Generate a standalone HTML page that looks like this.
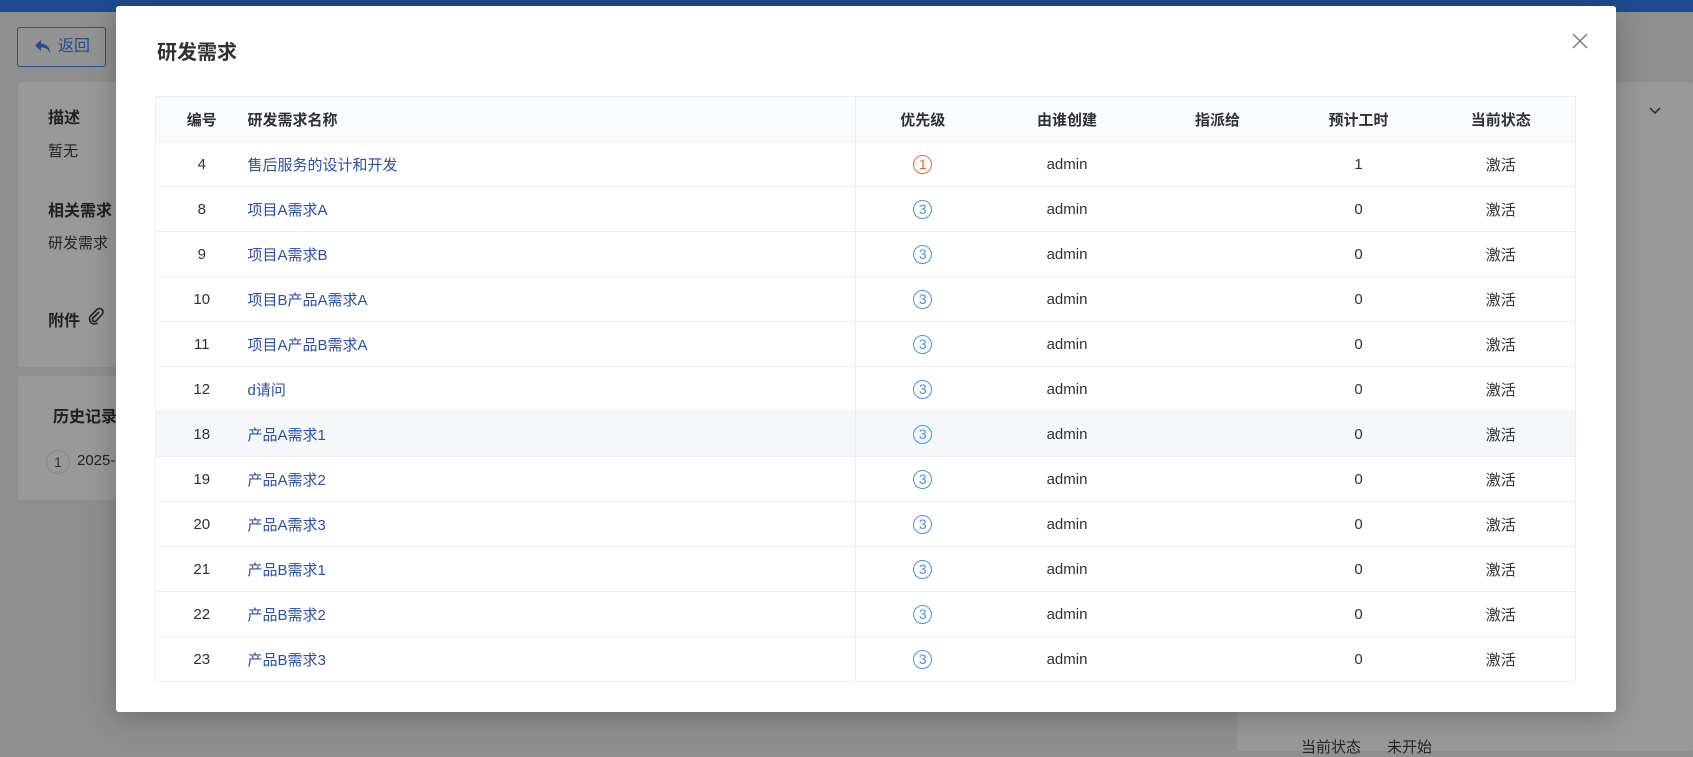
<!DOCTYPE html>
<html><head><meta charset="utf-8"><style>
*{box-sizing:border-box;margin:0;padding:0}
body{width:1693px;height:751px;overflow:hidden;background:#8f8f8f;font-family:"Liberation Sans","Noto Sans CJK SC",sans-serif;position:relative;color:#222}
.abs{position:absolute}
.bar{left:0;top:0;width:1693px;height:12px;background:#1e4b8f}
.card{background:#999999;border-radius:3px}
.bt{font-weight:bold;font-size:16px;color:#1f1f1f}
.t{font-size:15px;color:#222}
.modal{left:116px;top:6px;width:1500px;height:706px;background:#fff;border-radius:3px;box-shadow:0 4px 30px rgba(0,0,0,.25)}
.title{left:41px;top:30px;font-size:20px;font-weight:bold;color:#303133}
.close{left:1456px;top:27px}
table{position:absolute;left:39px;top:90px;width:1421px;border-collapse:collapse;border:1px solid #ebeef5;font-size:15px}
th{height:45px;background:#fafbfd;color:#303133;font-weight:bold;border-bottom:1px solid #ebeef5;text-align:center}
td{height:45px;border-bottom:1px solid #ebeef5;text-align:center;color:#303133}
td.n,th.n{text-align:left;padding-left:0;color:#2c4ea8}
th.n{color:#303133}
.div{border-right:1px solid #ebeef5}
tr.h td{background:#f5f7fa}
.p{display:inline-block;width:19px;height:19px;border:1px solid #4a8ff0;border-radius:50%;color:#4a8ff0;font-size:14px;line-height:17px;text-align:center}
.p.r{border-color:#f2612f;color:#f2612f}
</style></head><body>
<div class="abs bar"></div>
<div class="abs" style="left:17px;top:27px;width:89px;height:40px;border:1px solid #2f4f8f;border-radius:3px;background:#939393;color:#2a4a8c;font-size:16px;line-height:38px;padding-left:40px">返回
<svg class="abs" style="left:16px;top:11px" width="18" height="16" viewBox="0 0 18 16"><path d="M7 1L1 6.5L7 12V8.5C11 8.5 14 9.5 16 14C16 9 13 5 7 4.5Z" fill="#2a4a8c"/></svg></div>
<div class="abs card" style="left:18px;top:82px;width:110px;height:285px"></div>
<div class="abs bt" style="left:48px;top:104px">描述</div>
<div class="abs t" style="left:48px;top:140px">暂无</div>
<div class="abs bt" style="left:48px;top:197px">相关需求</div>
<div class="abs t" style="left:48px;top:232px">研发需求</div>
<div class="abs bt" style="left:48px;top:307px">附件</div>
<svg class="abs" style="left:87px;top:307px" width="18" height="18" viewBox="0 0 18 18"><path d="M12 5L6 11a2 2 0 0 0 3 3l6-6.5a3.5 3.5 0 0 0-5-5L3.5 9a5 5 0 0 0 7 7" stroke="#222" stroke-width="1.6" fill="none"/></svg>
<div class="abs card" style="left:18px;top:376px;width:110px;height:124px"></div>
<div class="abs bt" style="left:53px;top:403px">历史记录</div>
<div class="abs" style="left:46px;top:450px;width:24px;height:24px;border:1px solid #888;border-radius:50%;font-size:14px;text-align:center;line-height:22px;color:#333">1</div>
<div class="abs t" style="left:77px;top:452px">2025-</div>
<div class="abs card" style="left:1616px;top:82px;width:77px;height:669px;background:#999"></div>
<svg class="abs" style="left:1648px;top:106px" width="14" height="10"><path d="M2 2L7 7L12 2" stroke="#333" stroke-width="1.6" fill="none"/></svg>
<div class="abs card" style="left:1237px;top:712px;width:456px;height:39px;background:#999"></div>
<div class="abs t" style="left:1301px;top:736px">当前状态</div>
<div class="abs t" style="left:1387px;top:736px">未开始</div>
<div class="abs modal">
<div class="abs title">研发需求</div>
<svg class="abs close" width="16" height="16"><path d="M1 1L15 15M15 1L1 15" stroke="#7a7d85" stroke-width="1.5"/></svg>
<table>
<tr><th style="width:92px">编号</th><th class="n div" style="width:608px">研发需求名称</th><th style="width:134px">优先级</th><th style="width:155px">由谁创建</th><th style="width:146px">指派给</th><th style="width:136px">预计工时</th><th>当前状态</th></tr>
<tr><td>4</td><td class="n div">售后服务的设计和开发</td><td><span class="p r">1</span></td><td>admin</td><td></td><td>1</td><td>激活</td></tr>
<tr><td>8</td><td class="n div">项目A需求A</td><td><span class="p">3</span></td><td>admin</td><td></td><td>0</td><td>激活</td></tr>
<tr><td>9</td><td class="n div">项目A需求B</td><td><span class="p">3</span></td><td>admin</td><td></td><td>0</td><td>激活</td></tr>
<tr><td>10</td><td class="n div">项目B产品A需求A</td><td><span class="p">3</span></td><td>admin</td><td></td><td>0</td><td>激活</td></tr>
<tr><td>11</td><td class="n div">项目A产品B需求A</td><td><span class="p">3</span></td><td>admin</td><td></td><td>0</td><td>激活</td></tr>
<tr><td>12</td><td class="n div">d请问</td><td><span class="p">3</span></td><td>admin</td><td></td><td>0</td><td>激活</td></tr>
<tr class="h"><td>18</td><td class="n div">产品A需求1</td><td><span class="p">3</span></td><td>admin</td><td></td><td>0</td><td>激活</td></tr>
<tr><td>19</td><td class="n div">产品A需求2</td><td><span class="p">3</span></td><td>admin</td><td></td><td>0</td><td>激活</td></tr>
<tr><td>20</td><td class="n div">产品A需求3</td><td><span class="p">3</span></td><td>admin</td><td></td><td>0</td><td>激活</td></tr>
<tr><td>21</td><td class="n div">产品B需求1</td><td><span class="p">3</span></td><td>admin</td><td></td><td>0</td><td>激活</td></tr>
<tr><td>22</td><td class="n div">产品B需求2</td><td><span class="p">3</span></td><td>admin</td><td></td><td>0</td><td>激活</td></tr>
<tr><td>23</td><td class="n div">产品B需求3</td><td><span class="p">3</span></td><td>admin</td><td></td><td>0</td><td>激活</td></tr>
</table>
</div>
</body></html>
